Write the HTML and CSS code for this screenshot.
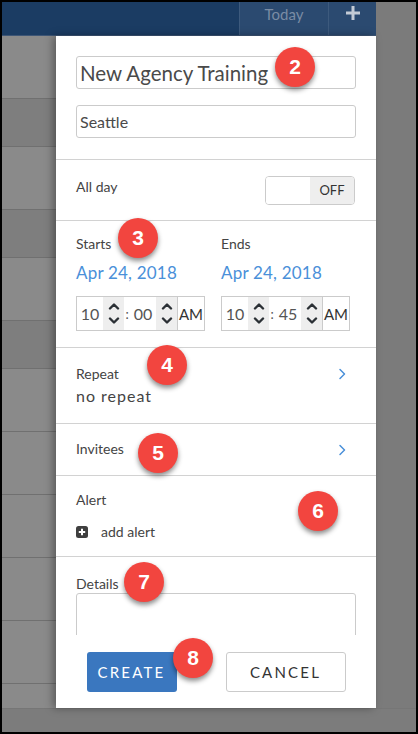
FILE: index.html
```html
<!DOCTYPE html>
<html>
<head>
<meta charset="utf-8">
<link rel="stylesheet" href="styles.css">
</head>
<body>
<div class="frame">
  <div class="screen">
    <div class="app">
      <header class="topbar">
        <div class="tb-space"></div>
        <div class="tb-btn tb-today">Today</div>
        <div class="tb-btn tb-plus"><svg width="16" height="16" viewBox="0 0 16 16"><path d="M8 1v14M1 8h14" stroke="#c3cbd5" stroke-width="3"/></svg></div>
      </header>
      <div class="list">
        <div class="row r62"></div>
        <div class="row hdr"></div>
        <div class="row"></div>
        <div class="row hdr"></div>
        <div class="row"></div>
        <div class="row hdr"></div>
        <div class="row"></div>
        <div class="row"></div>
        <div class="row"></div>
        <div class="row"></div>
        <div class="row"></div>
        <div class="row last"></div>
      </div>
    </div>
    <div class="side"></div>
    <div class="bottom"></div>

    <div class="modal">
      <div class="modal-body">
        <section class="sec sec-inputs">
          <div class="field title">New Agency Training</div>
          <div class="field loc">Seattle</div>
        </section>
        <section class="sec sec-allday">
          <span class="label">All day</span>
          <div class="toggle"><span class="tg-on"></span><span class="tg-off">OFF</span></div>
        </section>
        <section class="sec sec-times">
          <div class="tcol">
            <div class="label">Starts</div>
            <div class="date">Apr 24, 2018</div>
            <div class="tpick">
              <span class="tnum">10</span>
              <span class="spin">
                <svg width="12" height="8" viewBox="0 0 12 8"><polyline points="2,6.5 6,2.5 10,6.5" fill="none" stroke="#2b3035" stroke-width="2.4" stroke-linecap="round" stroke-linejoin="round"/></svg>
                <svg width="12" height="8" viewBox="0 0 12 8"><polyline points="2,1.5 6,5.5 10,1.5" fill="none" stroke="#2b3035" stroke-width="2.4" stroke-linecap="round" stroke-linejoin="round"/></svg>
              </span>
              <span class="colon">:</span>
              <span class="tnum">00</span>
              <span class="spin">
                <svg width="12" height="8" viewBox="0 0 12 8"><polyline points="2,6.5 6,2.5 10,6.5" fill="none" stroke="#2b3035" stroke-width="2.4" stroke-linecap="round" stroke-linejoin="round"/></svg>
                <svg width="12" height="8" viewBox="0 0 12 8"><polyline points="2,1.5 6,5.5 10,1.5" fill="none" stroke="#2b3035" stroke-width="2.4" stroke-linecap="round" stroke-linejoin="round"/></svg>
              </span>
              <span class="ampm">AM</span>
            </div>
          </div>
          <div class="tcol">
            <div class="label">Ends</div>
            <div class="date">Apr 24, 2018</div>
            <div class="tpick">
              <span class="tnum">10</span>
              <span class="spin">
                <svg width="12" height="8" viewBox="0 0 12 8"><polyline points="2,6.5 6,2.5 10,6.5" fill="none" stroke="#2b3035" stroke-width="2.4" stroke-linecap="round" stroke-linejoin="round"/></svg>
                <svg width="12" height="8" viewBox="0 0 12 8"><polyline points="2,1.5 6,5.5 10,1.5" fill="none" stroke="#2b3035" stroke-width="2.4" stroke-linecap="round" stroke-linejoin="round"/></svg>
              </span>
              <span class="colon">:</span>
              <span class="tnum">45</span>
              <span class="spin">
                <svg width="12" height="8" viewBox="0 0 12 8"><polyline points="2,6.5 6,2.5 10,6.5" fill="none" stroke="#2b3035" stroke-width="2.4" stroke-linecap="round" stroke-linejoin="round"/></svg>
                <svg width="12" height="8" viewBox="0 0 12 8"><polyline points="2,1.5 6,5.5 10,1.5" fill="none" stroke="#2b3035" stroke-width="2.4" stroke-linecap="round" stroke-linejoin="round"/></svg>
              </span>
              <span class="ampm">AM</span>
            </div>
          </div>
        </section>
        <section class="sec sec-repeat">
          <div class="stack">
            <div class="label">Repeat</div>
            <div class="value">no repeat</div>
          </div>
          <svg class="chev" width="8" height="12" viewBox="0 0 8 12"><polyline points="2,1.5 6.5,6 2,10.5" fill="none" stroke="#4a90d9" stroke-width="1.5" stroke-linecap="round" stroke-linejoin="round"/></svg>
        </section>
        <section class="sec sec-invitees">
          <span class="label">Invitees</span>
          <svg class="chev" width="8" height="12" viewBox="0 0 8 12"><polyline points="2,1.5 6.5,6 2,10.5" fill="none" stroke="#4a90d9" stroke-width="1.5" stroke-linecap="round" stroke-linejoin="round"/></svg>
        </section>
        <section class="sec sec-alert">
          <div class="label">Alert</div>
          <div class="add">
            <svg width="12" height="12" viewBox="0 0 12 12"><rect x="0" y="0" width="12" height="12" rx="2.5" fill="#3f3f3f"/><path d="M6 2.8v6.4M2.8 6h6.4" stroke="#fff" stroke-width="2"/></svg>
            <span>add alert</span>
          </div>
        </section>
        <section class="sec sec-details">
          <div class="label">Details</div>
          <div class="textarea"></div>
        </section>
      </div>
      <footer class="modal-foot">
        <div class="btn btn-create">CREATE</div>
        <div class="btn btn-cancel">CANCEL</div>
      </footer>
    </div>

    <div class="badge b2">2</div>
    <div class="badge b3">3</div>
    <div class="badge b4">4</div>
    <div class="badge b5">5</div>
    <div class="badge b6">6</div>
    <div class="badge b7">7</div>
    <div class="badge b8">8</div>
  </div>
</div>
</body>
</html>
```
FILE: styles.css
```css
html, body { margin: 0; padding: 0; }
body {
  background: #000;
  width: 418px;
  height: 734px;
  overflow: hidden;
  font-family: "Lato", "Open Sans", sans-serif;
}
.frame { padding: 2px; width: 414px; height: 730px; }
.screen {
  position: relative;
  width: 414px;
  height: 730px;
  display: grid;
  grid-template-columns: 374px 40px;
  grid-template-rows: 706px 24px;
  overflow: hidden;
}
.app { display: flex; flex-direction: column; background: #898989; }
.topbar {
  height: 33px;
  display: flex;
  background: #1b3c63;
  border-bottom: 1px solid #3e5676;
}
.tb-space { flex: 1; }
.tb-btn {
  background: #2b4a70;
  border-left: 1px solid #3d5a7d;
  display: flex;
  justify-content: center;
  align-items: flex-start;
  box-sizing: border-box;
}
.tb-today { width: 89px; color: #7a8ca4; font-size: 15px; line-height: 18px; padding-top: 3px; }
.tb-plus { width: 48px; padding-top: 3px; }
.list { flex: 1; display: flex; flex-direction: column; }
.row { height: 62px; border-bottom: 1px solid #707070; background: #8a8a8a; }
.row.hdr { height: 47px; background: #7e7e7e; }
.row.last { flex: 1; border-bottom: none; }
.side { background: #7b7b7b; }
.bottom { grid-column: 1 / 3; background: #7c7c7c; border-top: 1px solid #767676; }

.modal {
  position: absolute;
  left: 54px;
  top: 34px;
  width: 320px;
  height: 672px;
  background: #fff;
  display: flex;
  flex-direction: column;
  box-shadow: -3px 0 8px rgba(0,0,0,0.35);
  color: #444;
}
.modal-body { flex: 1; overflow: hidden; }
.sec { border-bottom: 1px solid #d2d2d2; padding: 0 20px; }
.label { font-size: 14px; color: #444; line-height: 17px; }

.sec-inputs { padding-top: 20px; padding-bottom: 21px; display: flex; flex-direction: column; gap: 16px; }
.field {
  height: 33px;
  box-sizing: border-box;
  border: 1px solid #cbcbcb;
  border-radius: 3px;
  display: flex;
  align-items: center;
  padding-left: 3px;
  color: #4a4a4a;
}
.field.title { font-size: 20.5px; }
.field.loc { font-size: 16px; }

.sec-allday { height: 60px; display: flex; align-items: center; justify-content: space-between; padding-right: 21px; }
.sec-allday .label { margin-top: -7px; }
.toggle {
  width: 90px; height: 29px; box-sizing: border-box;
  border: 1px solid #cbcbcb; border-radius: 4px;
  display: flex; overflow: hidden;
}
.tg-on { width: 44px; background: #fff; }
.tg-off { flex: 1; background: #eee; display: flex; align-items: center; justify-content: center; font-size: 13px; color: #333; }

.sec-times { display: flex; gap: 16px; padding-top: 14px; padding-bottom: 16px; }
.tcol { display: flex; flex-direction: column; }
.date { color: #4a90d9; font-size: 17px; line-height: 20px; letter-spacing: 0.2px; margin-top: 11px; }
.tpick {
  margin-top: 13px;
  width: 129px; height: 35px; box-sizing: border-box;
  border: 1px solid #cbcbcb;
  display: flex; align-items: stretch;
}
.tnum { width: 26px; display: flex; align-items: center; justify-content: center; font-size: 16px; color: #555; }
.spin { width: 21px; background: #eee; display: flex; flex-direction: column; align-items: center; justify-content: center; gap: 7px; }
.colon { width: 6px; display: flex; align-items: center; justify-content: center; font-size: 13px; color: #555; }
.ampm { flex: 1; border-left: 1px solid #cbcbcb; display: flex; align-items: center; justify-content: center; font-size: 15px; color: #333; }

.sec-repeat { height: 76px; display: flex; justify-content: space-between; align-items: flex-start; padding-top: 17px; box-sizing: border-box; padding-right: 30px; }
.stack { display: flex; flex-direction: column; }
.value { font-size: 16px; letter-spacing: 1px; margin-top: 4px; color: #444; }
.sec-repeat .chev { margin-top: 3px; }
.sec-invitees { height: 52px; display: flex; justify-content: space-between; align-items: center; padding-right: 30px; box-sizing: border-box; }
.sec-invitees .label { margin-top: -2px; }

.sec-alert { height: 81px; box-sizing: border-box; padding-top: 15px; }
.add { display: flex; align-items: center; gap: 13px; margin-top: 15px; font-size: 14px; color: #444; }

.sec-details { border-bottom: none; padding-top: 18px; }
.textarea { margin-top: 1px; height: 60px; border: 1px solid #cbcbcb; border-radius: 3px; }

.modal-foot { height: 73px; display: flex; justify-content: center; align-items: center; gap: 49px; background: #fff; position: relative; }
.btn {
  height: 40px; box-sizing: border-box; border-radius: 3px;
  display: flex; align-items: center; justify-content: center;
  font-size: 15px; letter-spacing: 2.2px;
}
.btn-create { width: 90px; background: #3a77bf; color: #fff; }
.btn-cancel { width: 120px; border: 1px solid #cbcbcb; color: #333; background: #fff; }

.badge {
  position: absolute;
  width: 40px; height: 40px; border-radius: 50%;
  background: #f2453f;
  color: #fff;
  font-family: "Liberation Sans", Arial, sans-serif;
  font-weight: 700; font-size: 21px;
  display: flex; align-items: center; justify-content: center;
  box-shadow: 0 3px 5px rgba(0,0,0,0.45);
}
.b2 { left: 273px; top: 45px; }
.b3 { left: 116px; top: 216px; }
.b4 { left: 145px; top: 343px; }
.b5 { left: 136px; top: 431px; }
.b6 { left: 296px; top: 489px; }
.b7 { left: 122px; top: 560px; }
.b8 { left: 171px; top: 636px; }
```
